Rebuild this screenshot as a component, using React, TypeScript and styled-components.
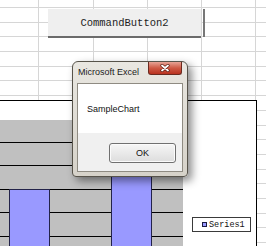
import React from 'react'
import styled, { createGlobalStyle } from 'styled-components'

const GlobalStyle = createGlobalStyle`
  html, body {
    margin: 0;
    padding: 0;
    background: #fff;
  }
  body {
    font-family: "Liberation Sans", Arial, sans-serif;
    overflow: hidden;
  }
`

const Page = styled.div`
  position: relative;
  width: 266px;
  height: 246px;
  overflow: hidden;
  background: #fff;
`

// worksheet cells behind the floating objects
const Sheet = styled.div`
  display: grid;
  grid-template-columns: 39px 55px 54px 54px 54px 20px;
  grid-template-rows: 8px repeat(17, 14.7px);
`

const Cell = styled.div`
  box-sizing: border-box;
  border-right: 1px solid #d6d6d6;
  border-bottom: 1px solid #d6d6d6;
`

const CommandButton = styled.div`
  position: absolute;
  left: 48px;
  top: 9px;
  width: 153px;
  height: 29px;
  box-sizing: border-box;
  background: #efefef;
  border-bottom: 2px solid #6b6b6b;
  display: flex;
  align-items: center;
  justify-content: center;
  font-family: "Liberation Mono", monospace;
  font-size: 10.5px;
  color: #1e1e1e;

  &::after {
    content: '';
    position: absolute;
    right: -4px;
    top: 0;
    bottom: -1px;
    width: 2px;
    background: #777;
  }
`

const Chart = styled.div`
  position: absolute;
  left: -30px;
  top: 100px;
  width: 287px;
  height: 170px;
  box-sizing: border-box;
  border: 1px solid #000;
  background: #fff;
  display: flex;
  align-items: flex-start;
  padding: 19px 4px 0 8px;
`

const PlotArea = styled.div`
  flex: none;
  width: 203.5px;
  height: 139.5px;
  background-color: #c0c0c0;
  background-image: repeating-linear-gradient(
    to bottom,
    transparent 0 21.5px,
    #000 21.5px 22.5px,
    transparent 22.5px 23.5px
  );
  display: grid;
  grid-template-columns: repeat(2, 1fr);
  align-items: end;
  justify-items: center;
`

const Bar = styled.div<{ $value: number }>`
  width: 41px;
  height: ${(p) => p.$value * 23.5}px;
  box-sizing: border-box;
  background: #9999ff;
  border: 1px solid #23234a;
  border-bottom: none;
`

const Legend = styled.div`
  flex: none;
  margin: 97px 0 0 9.5px;
  width: 59px;
  height: 15px;
  box-sizing: border-box;
  border: 1px solid #3a3a3a;
  background: #fff;
  display: flex;
  align-items: center;
  padding-left: 9px;
  gap: 2px;
  font-family: "Liberation Mono", monospace;
  font-size: 8.5px;
  color: #111;
`

const LegendKey = styled.span`
  width: 5px;
  height: 5px;
  box-sizing: border-box;
  background: #9999ff;
  border: 1px solid #1a1a40;
`

const Dialog = styled.div`
  position: absolute;
  left: 72px;
  top: 61px;
  width: 116px;
  height: 116px;
  box-sizing: border-box;
  border: 1px solid #57534a;
  border-radius: 6px 6px 4px 4px;
  background: linear-gradient(#e9e7e1, #d6d2c9);
  box-shadow: 4px 4px 9px rgba(0, 0, 0, 0.45);
  display: flex;
  flex-direction: column;
  padding: 0 4px 4px 4px;
`

const TitleBar = styled.div`
  height: 21px;
  display: flex;
  align-items: flex-start;
`

const Title = styled.span`
  padding: 5px 0 0 1px;
  font-size: 9px;
  color: #1a1a1a;
`

const CloseButton = styled.div`
  margin-left: auto;
  margin-right: 1px;
  width: 34px;
  height: 13px;
  box-sizing: border-box;
  border: 1px solid #6b2a1f;
  border-top: none;
  border-radius: 0 0 3px 3px;
  background: linear-gradient(#e7a496, #cf5a45 50%, #b9321f);
  display: flex;
  align-items: center;
  justify-content: center;
`

const Client = styled.div`
  flex: 1;
  border: 1px solid #8f8b82;
  display: flex;
  flex-direction: column;
`

const MessageArea = styled.div`
  height: 49px;
  background: #fff;
  display: flex;
  align-items: center;
  padding-left: 9px;
  font-size: 9px;
  color: #111;
`

const ButtonArea = styled.div`
  flex: 1;
  background: #f0f0f0;
  display: flex;
  justify-content: flex-end;
  align-items: flex-start;
  padding: 10px 6px 0 0;
`

const OkButton = styled.div`
  width: 67px;
  height: 20px;
  box-sizing: border-box;
  border: 1px solid #707070;
  border-radius: 3px;
  background: linear-gradient(#f6f6f6, #dddddd);
  box-shadow: inset 0 0 0 1px #fbfbfb;
  display: flex;
  align-items: center;
  justify-content: center;
  font-size: 9px;
  color: #111;
`

const CloseGlyph = () => (
  <svg width="10" height="8" viewBox="0 0 10 8">
    <path d="M2 1.5 L8 6.5 M8 1.5 L2 6.5" stroke="#5a1a10" strokeWidth="3.2" strokeLinecap="round" />
    <path d="M2 1.5 L8 6.5 M8 1.5 L2 6.5" stroke="#fff" strokeWidth="1.8" strokeLinecap="round" />
  </svg>
)

const series = [3, 5]

export default function App() {
  return (
    <Page>
      <GlobalStyle />
      <Sheet>
        {Array.from({ length: 18 * 6 }).map((_, i) => (
          <Cell key={i} />
        ))}
      </Sheet>

      <CommandButton>CommandButton2</CommandButton>

      <Chart>
        <PlotArea>
          {series.map((v, i) => (
            <Bar key={i} $value={v} />
          ))}
        </PlotArea>
        <Legend>
          <LegendKey />
          Series1
        </Legend>
      </Chart>

      <Dialog>
        <TitleBar>
          <Title>Microsoft Excel</Title>
          <CloseButton>
            <CloseGlyph />
          </CloseButton>
        </TitleBar>
        <Client>
          <MessageArea>SampleChart</MessageArea>
          <ButtonArea>
            <OkButton>OK</OkButton>
          </ButtonArea>
        </Client>
      </Dialog>
    </Page>
  )
}
